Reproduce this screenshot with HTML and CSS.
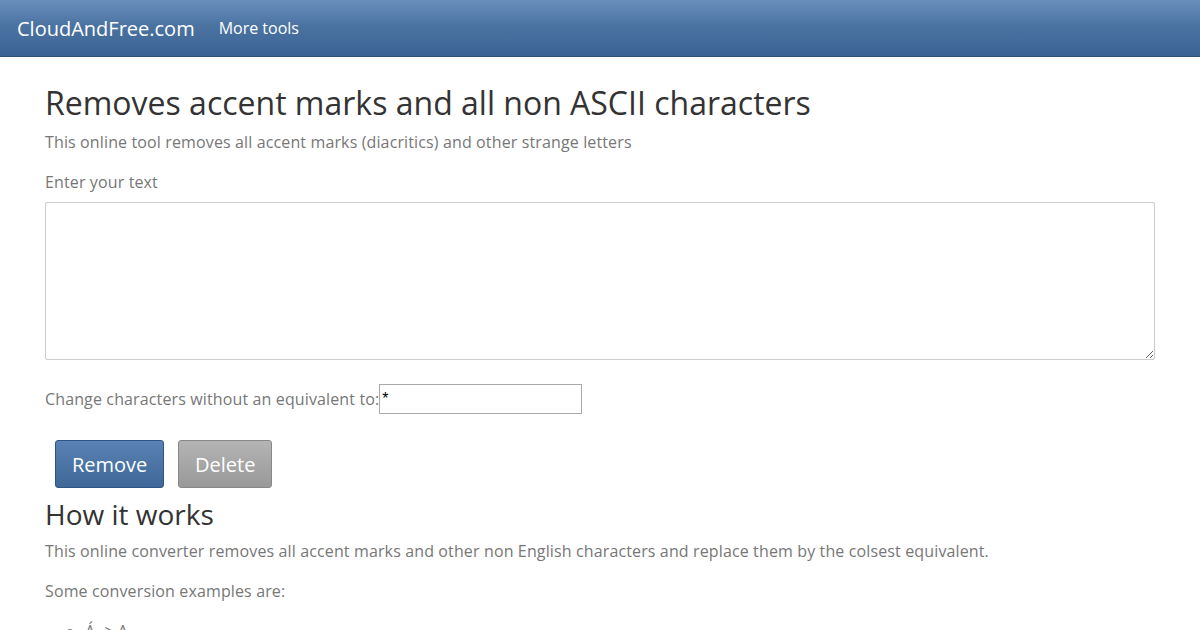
FILE: index.html
```html
<!DOCTYPE html>
<html>
<head>
<meta charset="utf-8">
<link rel="stylesheet" href="styles.css">
</head>
<body>
<nav class="navbar">
  <a class="brand" href="#">CloudAndFree.com</a>
  <a class="nav-link" href="#">More tools</a>
</nav>
<main class="container">
  <h1 class="title">Removes accent marks and all non ASCII characters</h1>
  <p class="lead">This online tool removes all accent marks (diacritics) and other strange letters</p>
  <label class="field-label">Enter your text</label>
  <textarea class="text-input"></textarea>
  <div class="replace-row">
    <span class="replace-label">Change characters without an equivalent to:</span><input class="replace-input" type="text" value="*">
  </div>
  <div class="buttons">
    <button class="btn btn-primary">Remove</button>
    <button class="btn btn-gray">Delete</button>
  </div>
  <h2 class="section-title">How it works</h2>
  <p class="text">This online converter removes all accent marks and other non English characters and replace them by the colsest equivalent.</p>
  <p class="text">Some conversion examples are:</p>
  <ul class="examples">
    <li>Á -&gt; A</li>
    <li>é -&gt; e</li>
  </ul>
</main>
</body>
</html>
```
FILE: styles.css
```css
html, body {
  margin: 0;
  padding: 0;
  background: #fff;
  font-family: "Open Sans", "Liberation Sans", sans-serif;
  color: #333;
}
.navbar {
  height: 57px;
  box-sizing: border-box;
  border-bottom: 1px solid #2d5075;
  background: linear-gradient(to bottom, #6a8fbd 0%, #4b73a2 45%, #3b6494 100%);
  display: flex;
  align-items: center;
  padding-left: 17px;
}
.brand {
  color: #fff;
  text-decoration: none;
  font-size: 20px;
  margin-right: 24px;
}
.nav-link {
  color: #fff;
  text-decoration: none;
  font-size: 16px;
}
.container {
  padding: 0 45px;
}
.title {
  font-size: 32px;
  font-weight: 400;
  margin: 26px 0 0 0;
  line-height: 40px;
  color: #333;
}
.lead {
  font-size: 16px;
  letter-spacing: 0.13px;
  color: #777;
  margin: 7px 0 0 0;
  line-height: 24px;
}
.field-label {
  display: block;
  font-size: 16px;
  letter-spacing: 0.13px;
  color: #777;
  margin-top: 16px;
  line-height: 24px;
}
.text-input {
  display: block;
  box-sizing: border-box;
  width: 100%;
  height: 158px;
  margin-top: 8px;
  border: 1px solid #ccc;
  border-radius: 2px;
  resize: vertical;
}
.replace-row {
  display: flex;
  align-items: center;
  margin-top: 24px;
}
.replace-label {
  font-size: 16px;
  letter-spacing: 0.13px;
  color: #777;
  line-height: 30px;
}
.replace-input {
  box-sizing: border-box;
  width: 203px;
  height: 30px;
  border: 1px solid #aaa;
  font-size: 16px;
  font-family: "Liberation Sans", sans-serif;
  padding: 0 2px;
  margin: 0;
  color: #000;
}
.buttons {
  display: flex;
  gap: 14px;
  margin-top: 26px;
  padding-left: 10px;
}
.btn {
  height: 48px;
  border-radius: 3px;
  font-family: "Open Sans", "Liberation Sans", sans-serif;
  font-size: 20px;
  color: #fff;
  padding: 0 16px;
  cursor: pointer;
}
.btn-primary {
  width: 109px;
  border: 1px solid #2e5684;
  background: linear-gradient(to bottom, #5a82b4 0%, #3e6898 100%);
}
.btn-gray {
  width: 94px;
  border: 1px solid #888;
  background: linear-gradient(to bottom, #b4b4b4 0%, #999 100%);
}
.section-title {
  font-size: 28px;
  font-weight: 400;
  margin: 9px 0 0 0;
  line-height: 34px;
  color: #333;
}
.text {
  font-size: 16px;
  letter-spacing: 0.13px;
  color: #777;
  margin: 8px 0 16px 0;
  line-height: 24px;
}
.examples {
  margin: 0;
  padding-left: 40px;
  font-size: 16px;
  color: #777;
  line-height: 24px;
}
```
